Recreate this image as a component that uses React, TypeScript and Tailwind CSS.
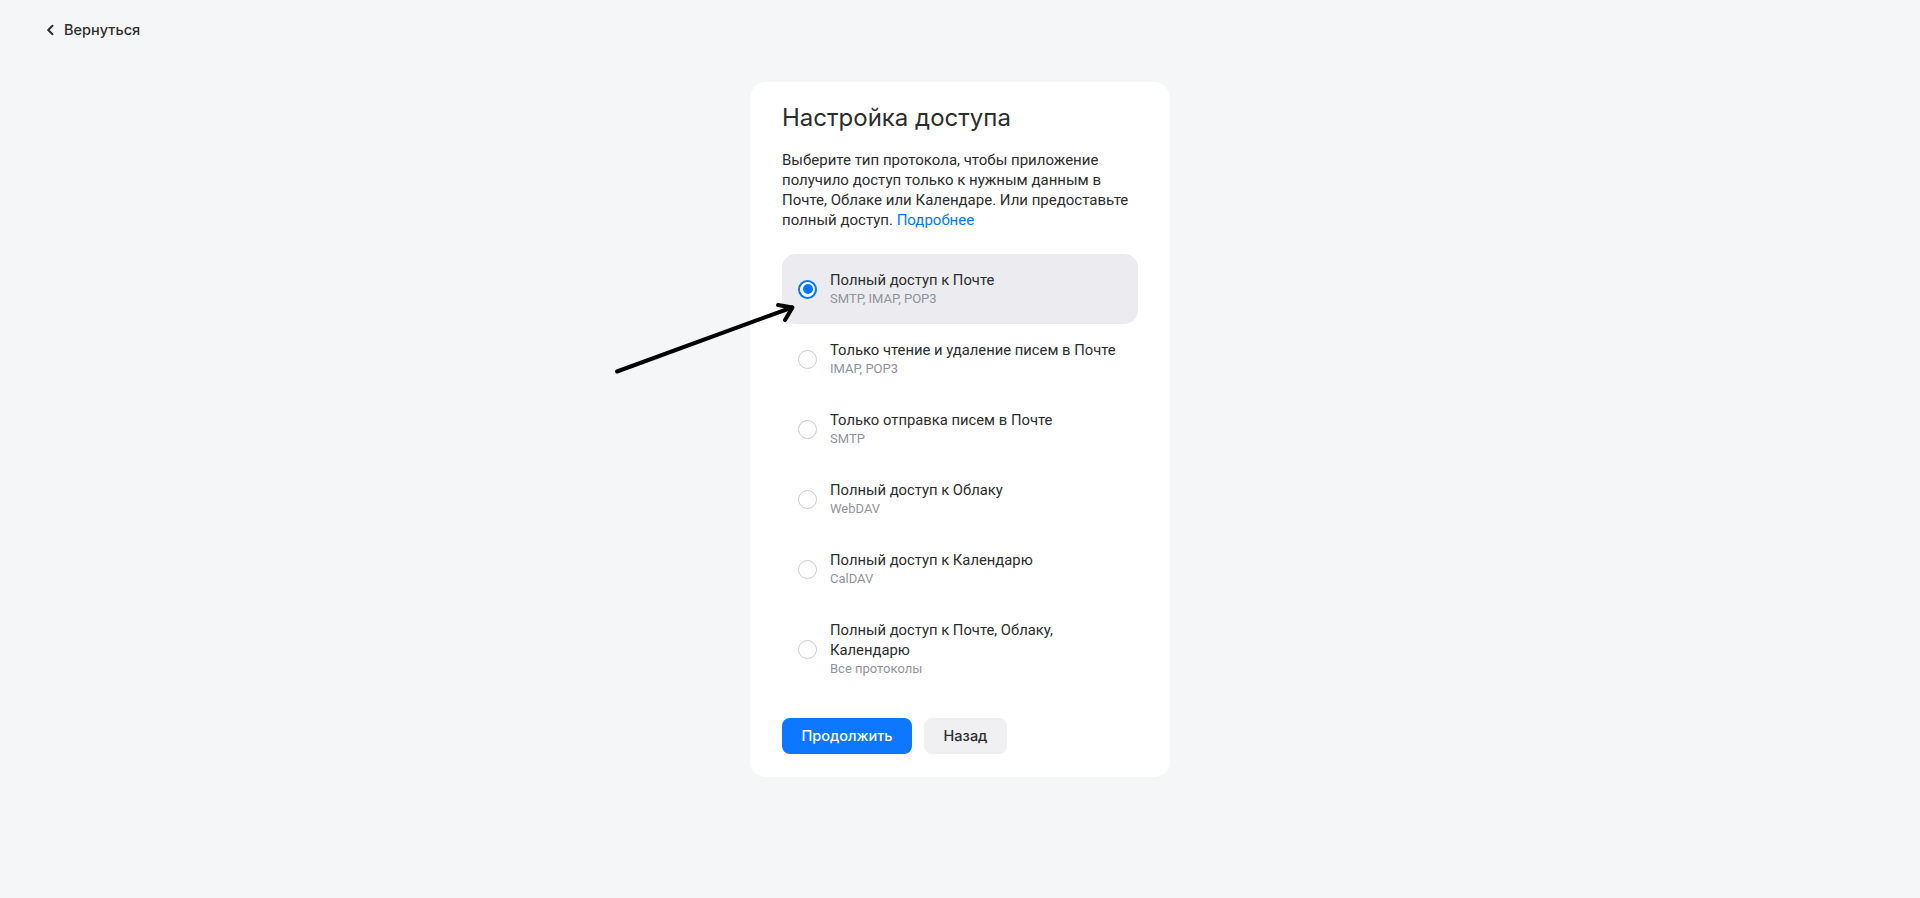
import React, { useState } from "react";

type Option = {
  id: string;
  title: string;
  protocols: string;
};

const options: Option[] = [
  { id: "mail", title: "Полный доступ к Почте", protocols: "SMTP, IMAP, POP3" },
  { id: "read", title: "Только чтение и удаление писем в Почте", protocols: "IMAP, POP3" },
  { id: "send", title: "Только отправка писем в Почте", protocols: "SMTP" },
  { id: "cloud", title: "Полный доступ к Облаку", protocols: "WebDAV" },
  { id: "calendar", title: "Полный доступ к Календарю", protocols: "CalDAV" },
  { id: "all", title: "Полный доступ к Почте, Облаку, Календарю", protocols: "Все протоколы" },
];

const Radio = ({ checked }: { checked: boolean }) =>
  checked ? (
    <span className="flex h-[19px] w-[19px] shrink-0 items-center justify-center rounded-full border-2 border-[#0077ff] bg-white">
      <span className="h-[10px] w-[10px] rounded-full bg-[#0077ff]" />
    </span>
  ) : (
    <span className="h-[19px] w-[19px] shrink-0 rounded-full border-[1.5px] border-[#c9ccd1] bg-white" />
  );

export default function App() {
  const [selected, setSelected] = useState("mail");

  return (
    <div className="relative min-h-screen bg-[#f5f6f8] text-[#2c2d2e]">
      <div className="flex h-[60px] items-center pl-[45px]">
        <button className="flex items-center gap-[9px] font-['Inter',sans-serif] text-[14.5px] font-medium text-[#2c2d2e]">
          <svg width="10" height="12" viewBox="0 0 10 12" fill="none">
            <path d="M7.5 1.8 L3.2 6 L7.5 10.2" stroke="#2c2d2e" strokeWidth="2" strokeLinecap="round" strokeLinejoin="round" />
          </svg>
          Вернуться
        </button>
      </div>

      <div className="mx-auto mt-[22px] w-[420px] rounded-2xl bg-white px-8 pb-[23px] pt-[22px]">
        <h1 className="font-['Inter',sans-serif] text-[24px] font-normal leading-[28px] text-[#2c2d2e]">
          Настройка доступа
        </h1>
        <p className="mt-[18px] font-['Roboto',sans-serif] text-[15px] leading-[20px] text-[#2c2d2e]">
          Выберите тип протокола, чтобы приложение получило доступ только к нужным данным в Почте, Облаке или Календаре. Или предоставьте полный доступ.{" "}
          <a className="text-[#0077ff]">Подробнее</a>
        </p>

        <div className="mt-6 flex flex-col">
          {options.map((o) => {
            const active = o.id === selected;
            return (
              <div
                key={o.id}
                onClick={() => setSelected(o.id)}
                className={
                  "flex cursor-pointer items-center gap-[13px] rounded-[14px] px-4 py-4 " +
                  (active ? "bg-[#ebebf0]" : "bg-transparent")
                }
              >
                <Radio checked={active} />
                <div className="flex flex-col">
                  <span className="font-['Roboto',sans-serif] text-[14.8px] leading-[20px] text-[#2c2d2e]">{o.title}</span>
                  <span className="font-['Roboto',sans-serif] text-[13px] leading-[18px] text-[#8f949b]">{o.protocols}</span>
                </div>
              </div>
            );
          })}
        </div>

        <div className="mt-6 flex gap-3 font-['Inter',sans-serif] text-[14.5px] font-medium">
          <button className="h-9 w-[130px] rounded-lg bg-[#0d77ff] text-white">Продолжить</button>
          <button className="h-9 w-[83px] rounded-lg bg-[#f0f0f2] text-[#2c2d2e]">Назад</button>
        </div>
      </div>

      <svg className="pointer-events-none absolute left-0 top-0" width="1920" height="898" fill="none">
        <path d="M617 371.5 L792 307.5" stroke="#000" strokeWidth="4" strokeLinecap="round" />
        <path d="M778 305 L792.5 307.5 L785 320" stroke="#000" strokeWidth="4" strokeLinecap="round" strokeLinejoin="round" />
      </svg>
    </div>
  );
}
